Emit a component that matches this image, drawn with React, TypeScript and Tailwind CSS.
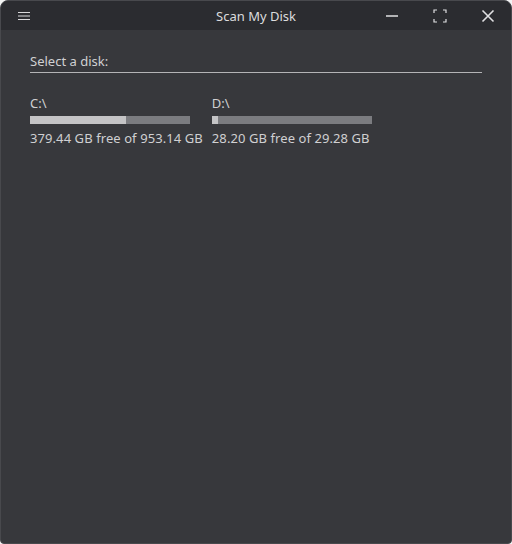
const disks = [
  { name: 'C:\\', free: 379.44, total: 953.14 },
  { name: 'D:\\', free: 28.2, total: 29.28 },
]

function DiskCard({ name, free, total }: { name: string; free: number; total: number }) {
  const used = ((total - free) / total) * 100
  return (
    <div className="flex flex-col">
      <span className="text-[13px] leading-[18px] text-[#d0d0d2]">{name}</span>
      <div className="mt-[4px] h-[8px] w-[160px] bg-[#7b7c80]">
        <div className="h-full bg-[#c4c4c6]" style={{ width: `${used}%` }} />
      </div>
      <span className="mt-[5px] text-[13px] leading-[18px] tracking-[0.08px] text-[#d0d0d2] whitespace-nowrap">
        {free.toFixed(2)} GB free of {total.toFixed(2)} GB
      </span>
    </div>
  )
}

export default function App() {
  return (
    <div className="w-[512px] h-[544px] bg-[#f4f4f4] font-['Noto_Sans',sans-serif]">
      <div className="w-full h-full flex flex-col rounded-t-[8px] rounded-b-[4px] overflow-hidden border border-[#48494d] bg-[#37383c]">
        <header className="h-[29px] shrink-0 bg-[#2b2c30] flex items-center relative">
          <svg className="ml-[17px]" width="13" height="10" viewBox="0 0 13 10">
            <path d="M0 1.5h12M0 5h12M0 8.5h12" stroke="#d8d8da" strokeWidth="1.2" />
          </svg>
          <span className="absolute left-0 right-0 top-[6px] text-center text-[13px] leading-[18px] text-[#dcdcde] pointer-events-none">
            Scan My Disk
          </span>
          <div className="ml-auto flex items-center">
            <svg width="14" height="14" viewBox="0 0 14 14" className="mr-[34px]">
              <path d="M1 7h12" stroke="#e0e0e2" strokeWidth="1.5" />
            </svg>
            <svg width="14" height="14" viewBox="0 0 14 14" className="mr-[34px]">
              <path
                d="M1 4V1h3M10 1h3v3M13 10v3h-3M4 13H1v-3"
                stroke="#e0e0e2"
                strokeWidth="1.2"
                fill="none"
              />
            </svg>
            <svg width="14" height="14" viewBox="0 0 14 14" className="mr-[16px]">
              <path d="M1.5 1.5l11 11M12.5 1.5l-11 11" stroke="#e0e0e2" strokeWidth="1.6" />
            </svg>
          </div>
        </header>

        <main className="flex-1 px-[29px] pt-[18px]">
          <div className="border-b border-[#b4b4b6]">
            <span className="text-[13px] leading-[18px] text-[#d0d0d2]">Select a disk:</span>
          </div>
          <div className="mt-[21px] flex gap-[9px]">
            {disks.map((d) => (
              <DiskCard key={d.name} {...d} />
            ))}
          </div>
        </main>
      </div>
    </div>
  )
}
